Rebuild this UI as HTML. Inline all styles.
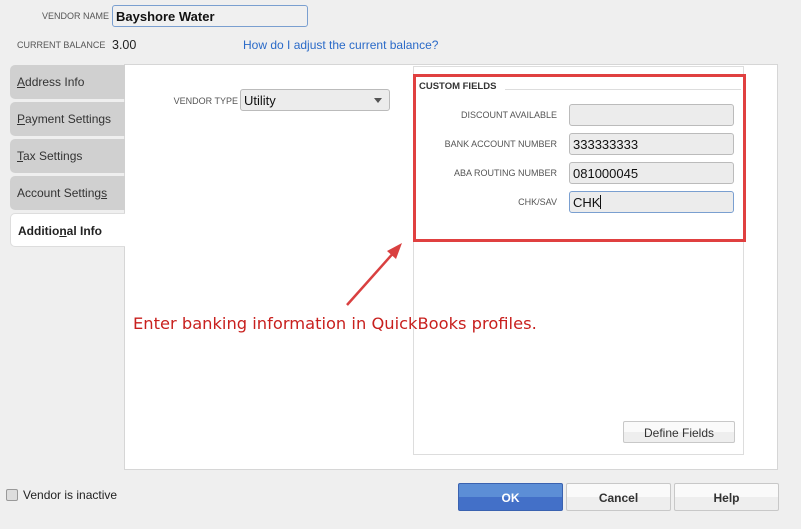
<!DOCTYPE html>
<html><head><style>
body{margin:0;width:801px;height:529px;background:#efefef;font-family:"Liberation Sans",sans-serif;position:relative;overflow:hidden;color:#222}
.a{position:absolute}
.lbl{font-size:9px;color:#555;text-align:right}
.inp{position:absolute;background:#ececec;border:1px solid #bbb;border-radius:3px;box-sizing:border-box;font-size:13px;padding:3px 3px;color:#111}
.tab{position:absolute;left:10px;width:115px;height:34px;background:#d0d0d0;border-radius:5px 0 0 5px;font-size:12px;color:#333;box-sizing:border-box;padding:10px 7px}
.btn{position:absolute;box-sizing:border-box;border:1px solid #c8c8c8;border-radius:2px;background:linear-gradient(#fafafa 50%,#eee 50%);font-size:12px;text-align:center;color:#333;font-weight:bold}
</style></head><body>
<div class="a lbl" style="left:20px;top:11px;width:89px">VENDOR NAME</div>
<div class="inp" style="left:112px;top:5px;width:196px;height:22px;background:#f0f0f0;border-color:#7a9fd0;font-weight:bold">Bayshore Water</div>
<div class="a lbl" style="left:17px;top:40px;text-align:left">CURRENT BALANCE</div>
<div class="a" style="left:112px;top:38px;font-size:12.5px">3.00</div>
<div class="a" style="left:243px;top:38px;font-size:12px;color:#2a6ac8">How do I adjust the current balance?</div>

<div class="a" style="left:124px;top:64px;width:654px;height:406px;background:#fff;border:1px solid #d6d6d6;box-sizing:border-box"></div>
<div class="tab" style="top:65px"><u>A</u>ddress Info</div>
<div class="tab" style="top:102px"><u>P</u>ayment Settings</div>
<div class="tab" style="top:139px"><u>T</u>ax Settings</div>
<div class="tab" style="top:176px">Account Setting<u>s</u></div>
<div class="tab" style="top:213px;background:#fff;border:1px solid #ddd;border-right:none;font-weight:bold;color:#222">Additio<u>n</u>al Info</div>

<div class="a lbl" style="left:160px;top:96px;width:78px">VENDOR TYPE</div>
<div class="inp" style="left:240px;top:89px;width:150px;height:22px">Utility<span style="position:absolute;right:7px;top:8px;border:4px solid transparent;border-top:5px solid #555;border-bottom:none"></span></div>

<div class="a" style="left:413px;top:66px;width:331px;height:389px;border:1px solid #ddd;box-sizing:border-box"></div>
<div class="a" style="left:413px;top:74px;width:333px;height:168px;border:3px solid #e04040;box-sizing:border-box"></div>
<div class="a" style="left:419px;top:81px;font-size:9.5px;font-weight:bold;color:#333">CUSTOM FIELDS</div>
<div class="a" style="left:505px;top:89px;width:236px;height:1px;background:#ddd"></div>
<div class="a lbl" style="left:420px;top:110px;width:137px">DISCOUNT AVAILABLE</div>
<div class="inp" style="left:569px;top:104px;width:165px;height:22px"></div>
<div class="a lbl" style="left:420px;top:139px;width:137px">BANK ACCOUNT NUMBER</div>
<div class="inp" style="left:569px;top:133px;width:165px;height:22px">333333333</div>
<div class="a lbl" style="left:420px;top:168px;width:137px">ABA ROUTING NUMBER</div>
<div class="inp" style="left:569px;top:162px;width:165px;height:22px">081000045</div>
<div class="a lbl" style="left:420px;top:197px;width:137px">CHK/SAV</div>
<div class="inp" style="left:569px;top:191px;width:165px;height:22px;border-color:#7a9fd0">CHK<span style="display:inline-block;width:1px;height:14px;background:#111;vertical-align:-2px"></span></div>

<svg class="a" style="left:0;top:0" width="801" height="529"><line x1="347" y1="305" x2="396" y2="250" stroke="#d94040" stroke-width="2.5"/><polygon points="402,243 387,251 396,259" fill="#d94040"/></svg>
<div class="a" style="left:133px;top:314px;font-family:'DejaVu Sans',sans-serif;font-size:16.3px;color:#c8201e">Enter banking information in QuickBooks profiles.</div>

<div class="btn" style="left:623px;top:421px;width:112px;height:22px;padding-top:4px;font-weight:normal">Define Fields</div>

<div class="a" style="left:6px;top:489px;width:10px;height:10px;border:1px solid #999;border-radius:2px;background:#ddd"></div>
<div class="a" style="left:23px;top:488px;font-size:12px">Vendor is inactive</div>
<div class="btn" style="left:458px;top:483px;width:105px;height:28px;padding-top:7px;background:linear-gradient(#5c8ed6 50%,#4370c8 50%);border-color:#3a62b0;color:#fff">OK</div>
<div class="btn" style="left:566px;top:483px;width:105px;height:28px;padding-top:7px">Cancel</div>
<div class="btn" style="left:674px;top:483px;width:105px;height:28px;padding-top:7px">Help</div>
</body></html>
